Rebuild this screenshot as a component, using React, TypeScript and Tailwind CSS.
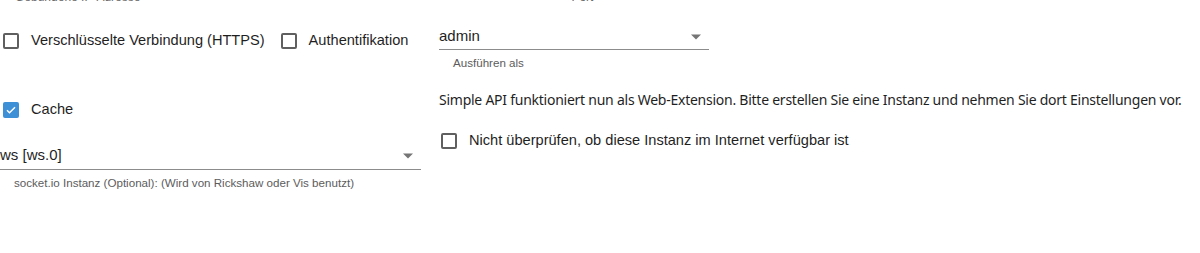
import React, { useState } from 'react';

const Box: React.FC<{ checked: boolean; onClick: () => void }> = ({ checked, onClick }) => (
  <span
    onClick={onClick}
    className={
      'flex h-[16px] w-[16px] shrink-0 items-center justify-center rounded-[2px] ' +
      (checked ? 'bg-[#3d8fd6]' : 'border-[2px] border-[#5f5f5f] bg-white')
    }
  >
    {checked && (
      <svg width="12" height="12" viewBox="0 0 24 24">
        <path d="M4 12.5l5 5L20 6.5" fill="none" stroke="#fff" strokeWidth="3" />
      </svg>
    )}
  </span>
);

const Check: React.FC<{ label: string; initial?: boolean; pad?: string }> = ({ label, initial = false, pad = 'pl-[3px]' }) => {
  const [checked, setChecked] = useState(initial);
  return (
    <label className={'flex h-[22px] cursor-pointer items-center gap-[12px] ' + pad}>
      <Box checked={checked} onClick={() => setChecked(!checked)} />
      <span className="whitespace-nowrap text-[14.6px] text-[#1f1f1f]">{label}</span>
    </label>
  );
};

const Select: React.FC<{ value: string; helper: string; width: string; height: string }> = ({ value, helper, width, height }) => (
  <div className={width}>
    <div className={'flex items-center justify-between border-b border-[#8c8c8c] pr-[8px] ' + height}>
      <span className="text-[15px] text-[#1f1f1f]">{value}</span>
      <svg width="10" height="6" viewBox="0 0 10 5">
        <path d="M0 0h10L5 5z" fill="#757575" />
      </svg>
    </div>
    <div className="mt-[4px] h-[17px] whitespace-nowrap pl-[14px] text-[11.6px] leading-[17px] text-[#5c5c5c]">{helper}</div>
  </div>
);

export default function App() {
  return (
    <div className="h-[253px] w-[1200px] overflow-hidden bg-white font-['Liberation_Sans',Arial,sans-serif]">
      <div className="-mt-[9px] flex h-[12px] text-[12px] leading-[12px] text-[#6b6b6b]">
        <span className="pl-[15px]">Gebundene IP-Adresse</span>
        <span className="pl-[431px]">Port</span>
      </div>
      <div className="flex">
        <div className="flex w-[439px] shrink-0 flex-col">
          <div className="mt-[27px] flex items-center gap-[13px]">
            <Check label="Verschlüsselte Verbindung (HTTPS)" />
            <Check label="Authentifikation" />
          </div>
          <div className="mt-[47px]">
            <Check label="Cache" initial />
          </div>
          <div className="mt-[21px]">
            <Select
              value="ws [ws.0]"
              helper="socket.io Instanz (Optional): (Wird von Rickshaw oder Vis benutzt)"
              width="w-[421px]"
              height="h-[28px]"
            />
          </div>
        </div>
        <div className="flex flex-col">
          <div className="mt-[21px]">
            <Select value="admin" helper="Ausführen als" width="w-[270px]" height="h-[26px]" />
          </div>
          <div className="mt-[19px] h-[20px] whitespace-nowrap font-['Noto_Sans',sans-serif] text-[14px] leading-[20px] tracking-[-0.25px] text-[#1f1f1f]">
            Simple API funktioniert nun als Web-Extension. Bitte erstellen Sie eine Instanz und nehmen Sie dort Einstellungen vor.
          </div>
          <div className="mt-[20px]">
            <Check label="Nicht überprüfen, ob diese Instanz im Internet verfügbar ist" pad="pl-[2px]" />
          </div>
        </div>
      </div>
    </div>
  );
}
